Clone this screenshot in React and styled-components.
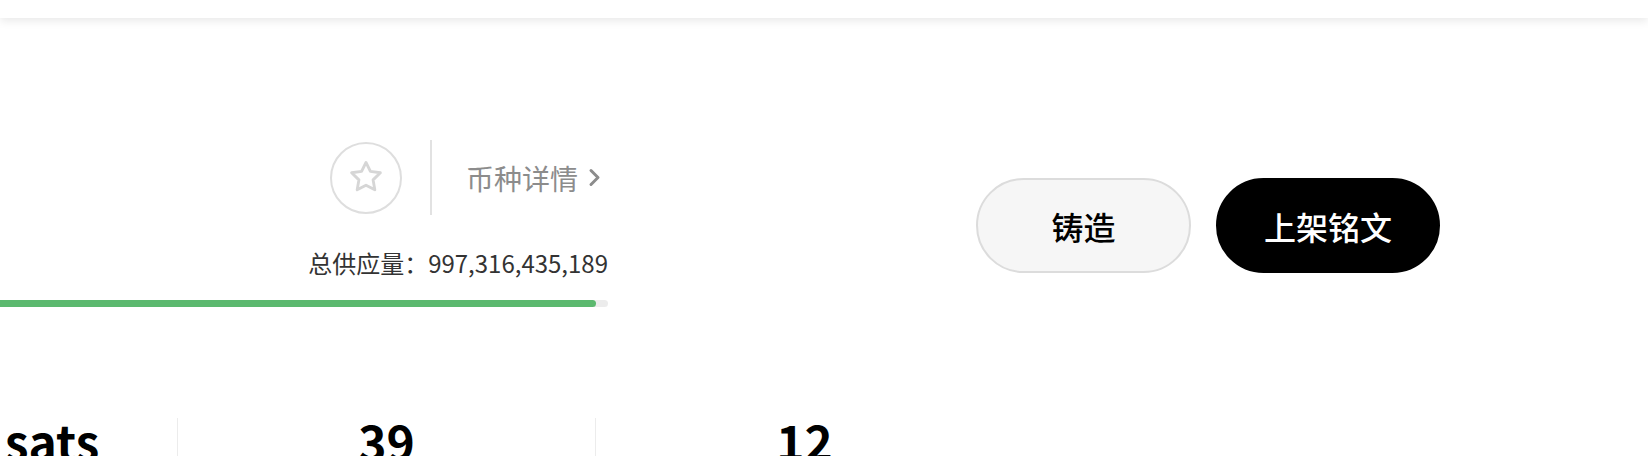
import React from 'react'
import styled, { createGlobalStyle } from 'styled-components'

const GlobalStyle = createGlobalStyle`
    * { box-sizing: border-box; }
    body {
        margin: 0;
        background: #fff;
        overflow: hidden;
        font-family: "Noto Sans CJK SC", "Noto Sans", sans-serif;
        color: #000;
    }
`;

const Header = styled.div`
    position: relative;
    z-index: 1;
    height: 18px;
    background: #fff;
    box-shadow: 0 3px 10px rgba(0, 0, 0, 0.09);
`;

const Main = styled.div`
    margin-left: -241px;
    padding-top: 122px;
`;

const TopRow = styled.div`
    display: flex;
    align-items: flex-start;
`;

const Info = styled.div`
    width: 849px;
    display: flex;
    flex-direction: column;
    align-items: flex-end;
`;

const ActionRow = styled.div`
    display: flex;
    align-items: center;
    height: 75px;
    padding-right: 7px;
`;

const StarButton = styled.div`
    width: 72px;
    height: 72px;
    border-radius: 50%;
    border: 2px solid #dedede;
    display: flex;
    align-items: center;
    justify-content: center;
    svg { margin-top: -1px; }
`;

const Divider = styled.div`
    width: 2px;
    height: 75px;
    background: #e2e2e2;
    margin: 0 34px 0 28px;
`;

const DetailLink = styled.div`
    display: flex;
    align-items: center;
    gap: 10px;
    font-size: 28px;
    line-height: 40px;
    color: #8c8c8c;
`;

const Supply = styled.div`
    margin-top: 33px;
    font-size: 24px;
    line-height: 30px;
    color: #333;
`;

const Progress = styled.div`
    margin-top: 22px;
    width: 100%;
    height: 7px;
    border-radius: 4px;
    background: #ececec;
    overflow: hidden;
`;

const Fill = styled.div`
    height: 100%;
    border-radius: 4px;
    background: #5cb96f;
`;

const Buttons = styled.div`
    display: flex;
    gap: 25px;
    margin: 38px 0 0 368px;
`;

const Button = styled.button`
    min-width: 215px;
    height: 95px;
    padding: 0 46px;
    border-radius: 48px;
    font-family: inherit;
    font-size: 32px;
    font-weight: 500;
    border: 2px solid ${props => props.$dark ? '#000' : '#dcdcdc'};
    background: ${props => props.$dark ? '#000' : '#f6f6f6'};
    color: ${props => props.$dark ? '#fff' : '#000'};
    cursor: pointer;
`;

const StatsRow = styled.div`
    display: flex;
    margin-top: 111px;
`;

const Stat = styled.div`
    width: 418px;
    padding-top: 2px;
    text-align: center;
    font-size: 48px;
    font-weight: 700;
    line-height: 40px;
    & + & { border-left: 1px solid #ececec; }
`;

const stats = ['123.45 sats', '39', '12']

const Star = () => (
    <svg width="46" height="46" viewBox="0 0 24 24" fill="none" stroke="#d6d6d6" strokeWidth="1.5" strokeLinejoin="round">
        <path d="M12 4.4l2.3 4.7 5.2.7-3.8 3.7.9 5.2L12 16.3l-4.6 2.4.9-5.2-3.8-3.7 5.2-.7z" />
    </svg>
)

const Chevron = () => (
    <svg width="13" height="19" viewBox="0 0 13 19" fill="none" stroke="#8c8c8c" strokeWidth="3" strokeLinecap="round" strokeLinejoin="round">
        <polyline points="3,2.5 10,9.5 3,16.5" />
    </svg>
)

const App = () => {
    return (
        <>
            <GlobalStyle />
            <Header />
            <Main>
                <TopRow>
                    <Info>
                        <ActionRow>
                            <StarButton><Star /></StarButton>
                            <Divider />
                            <DetailLink>币种详情<Chevron /></DetailLink>
                        </ActionRow>
                        <Supply>总供应量：997,316,435,189</Supply>
                        <Progress><Fill style={{ width: '98.6%' }} /></Progress>
                    </Info>
                    <Buttons>
                        <Button>铸造</Button>
                        <Button $dark>上架铭文</Button>
                    </Buttons>
                </TopRow>
                <StatsRow>
                    {stats.map((s, i) => <Stat key={i}>{s}</Stat>)}
                </StatsRow>
            </Main>
        </>
    )
}

export default App
